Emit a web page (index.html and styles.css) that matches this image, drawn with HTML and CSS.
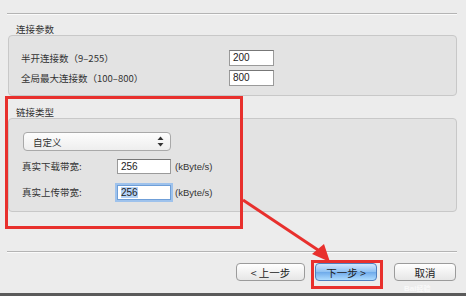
FILE: index.html
```html
<!DOCTYPE html>
<html lang="zh-CN">
<head>
    <meta charset="UTF-8">
    <title>连接参数</title>
    <link rel="stylesheet" href="styles.css">
</head>
<body>
    <div class="wizard">
        <div class="rule top-rule"></div>

        <div class="group-title">连接参数</div>
        <div class="group conn-group">
            <div class="row">
                <span class="label wide">半开连接数（9–255）</span>
                <span class="field w45">200</span>
            </div>
            <div class="row">
                <span class="label wide">全局最大连接数（100–800）</span>
                <span class="field w45">800</span>
            </div>
        </div>

        <div class="group-title link-title">链接类型</div>
        <div class="group link-group">
            <div class="select">
                <span>自定义</span>
                <svg class="updown" width="7" height="11" viewBox="0 0 7 11">
                    <path d="M3.5 0.5 L6.5 4 L0.5 4 Z" fill="#333"/>
                    <path d="M3.5 10.5 L6.5 7 L0.5 7 Z" fill="#333"/>
                </svg>
            </div>
            <div class="row">
                <span class="label">真实下载带宽:</span>
                <span class="field w54">256</span>
                <span class="unit">(kByte/s)</span>
            </div>
            <div class="row">
                <span class="label">真实上传带宽:</span>
                <span class="field w54 focused"><span class="sel">256</span></span>
                <span class="unit">(kByte/s)</span>
            </div>
        </div>

        <div class="rule bottom-rule"></div>

        <div class="buttons">
            <button class="btn prev">&lt; 上一步</button>
            <button class="btn next">下一步 &gt;</button>
            <button class="btn cancel">取消</button>
        </div>
    </div>
    <div class="bottom-bar"></div>

    <!-- annotations drawn over the screenshot -->
    <div class="mark mark-box"></div>
    <div class="mark mark-next"></div>
    <svg class="arrow" width="466" height="296" viewBox="0 0 466 296">
        <path d="M243 200 L318 250" stroke="#e8302d" stroke-width="3" fill="none"/>
        <path d="M330 262 L312 254 L324 244 Z" fill="#e8302d"/>
    </svg>
    <div class="watermark">Bai<span>经验</span></div>
</body>
</html>
```

FILE: styles.css
```css
body {
    margin: 0;
    width: 466px;
    height: 296px;
    overflow: hidden;
    position: relative;
    background: #ececec;
    font-family: 'Noto Sans CJK SC', 'Liberation Sans', sans-serif;
    font-size: 10px;
    color: #333;
}
.wizard {
    padding: 13px 9px 0 7px;
}
.rule {
    height: 1px;
    background: #b4b4b4;
    border-bottom: 1px solid #fafafa;
}
.group-title {
    margin: 8px 0 0 9px;
    height: 12px;
    line-height: 12px;
    font-size: 9.5px;
}
.link-title {
    margin-top: 10px;
}
.group {
    margin: 0 0 0 1px;
    background: #e3e3e3;
    border: 1px solid #c8c8c8;
    border-radius: 4px;
    display: flex;
    flex-direction: column;
}
.conn-group {
    height: 61px;
    padding: 14px 0 0 12px;
    box-sizing: border-box;
    gap: 4px;
}
.link-group {
    height: 94px;
    padding: 13px 0 0 13px;
    box-sizing: border-box;
    gap: 6px;
}
.row {
    display: flex;
    align-items: center;
    height: 16px;
}
.link-group .row + .row {
    margin-top: 4px;
}
.label {
    width: 95px;
    font-size: 9.5px;
}
.label.wide {
    width: 208px;
}
.field {
    box-sizing: border-box;
    height: 16px;
    background: #fff;
    border: 1px solid #9a9a9a;
    border-top-color: #777;
    padding: 0 3px;
    line-height: 14px;
    font-family: 'Liberation Sans', sans-serif;
    font-size: 10px;
    color: #222;
}
.w45 { width: 45px; }
.w54 { width: 54px; height: 15px; line-height: 13px; }
.focused {
    border: 1px solid #6f9fd8;
    box-shadow: 0 0 0 2px #9ec2ec;
}
.sel {
    background: #b5d3f7;
}
.unit {
    margin-left: 4px;
    font-family: 'Liberation Sans', sans-serif;
    font-size: 9.5px;
}
.select {
    box-sizing: border-box;
    width: 148px;
    height: 19px;
    margin-left: 1px;
    margin-bottom: 1px;
    display: flex;
    align-items: center;
    justify-content: space-between;
    padding: 0 6px 0 9px;
    background: linear-gradient(#fdfdfd, #eeeeee);
    border: 1px solid #a9a9a9;
    border-radius: 4px;
    font-size: 9.5px;
}
.bottom-rule {
    margin-top: 39px;
}
.buttons {
    display: flex;
    justify-content: flex-end;
    margin-top: 10px;
    margin-right: 1px;
    gap: 10px;
}
.btn {
    height: 18px;
    padding: 0;
    border: 1px solid #9b9b9b;
    border-radius: 4px;
    background: linear-gradient(#ffffff, #e6e6e6);
    font-family: 'Noto Sans CJK SC', 'Liberation Sans', sans-serif;
    font-size: 10.5px;
    color: #222;
}
.prev { width: 69px; }
.next {
    width: 62px;
    border-color: #4f7fbd;
    background: linear-gradient(#d3e7fc, #8cc0f2 50%, #6eaaea 51%, #addcff);
}
.cancel {
    width: 62px;
    margin-left: 7px;
}
.bottom-bar {
    position: absolute;
    left: 0;
    right: 0;
    bottom: 0;
    height: 3px;
    background: #5a5a5a;
}
.mark {
    position: absolute;
    border: 3px solid #e8302d;
}
.mark-box {
    left: 5px;
    top: 96px;
    width: 232px;
    height: 127px;
}
.mark-next {
    left: 311px;
    top: 260px;
    width: 66px;
    height: 23px;
}
.arrow {
    position: absolute;
    left: 0;
    top: 0;
}
.watermark {
    position: absolute;
    left: 404px;
    top: 284px;
    line-height: 8px;
    font-family: 'Liberation Sans', sans-serif;
    font-size: 8px;
    font-weight: bold;
    color: rgba(255, 255, 255, 0.7);
}
.watermark span {
    font-family: 'Noto Sans CJK SC', sans-serif;
    font-size: 7px;
}
```
